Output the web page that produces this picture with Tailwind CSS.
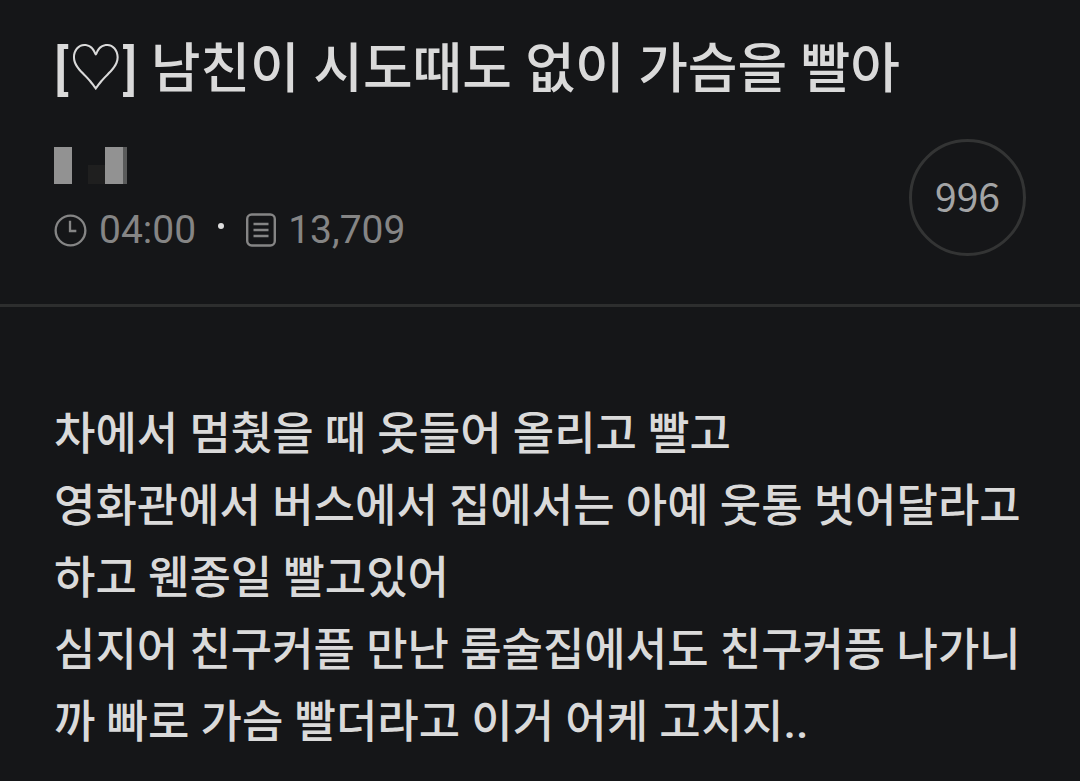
<!DOCTYPE html>
<html lang="ko">
<head>
    <meta charset="UTF-8">
    <meta name="viewport" content="width=device-width, initial-scale=1.0">
    <title>[♡] 남친이 시도때도 없이 가슴을 빨아</title>
    <script src="https://cdn.jsdelivr.net/npm/@tailwindcss/browser@4"></script>
</head>
<body class="bg-[#151618] text-[#dadada] font-['Roboto','Noto_Sans_CJK_KR',sans-serif]">
    <article>
        <!-- Cabecera -->
        <header class="border-b-3 border-[#2d2e2e] px-[54px] pt-[34px] pb-12">
            <h1 class="text-[54px] leading-[72px] font-medium">[<span class="font-normal leading-none font-['Noto_Sans_CJK_KR',sans-serif]">♡</span>] 남친이 시도때도 없이 가슴을 빨아</h1>
            <div class="mt-[33px] flex items-start justify-between">
                <div class="pt-2">
                    <!-- Autor oculto -->
                    <div class="flex h-[37px] w-[73px]" aria-hidden="true">
                        <span class="w-[18px] bg-[#929292]"></span>
                        <span class="w-4"></span>
                        <span class="mt-auto h-[19px] w-[17px] bg-[#1f1f1f]"></span>
                        <span class="w-[18px] bg-[#929292]"></span>
                        <span class="w-1 bg-[#5a5b5b]"></span>
                    </div>
                    <div class="mt-[22px] flex h-12 items-center text-[39px] leading-[48px] text-[#858585]">
                        <svg class="mr-3 size-[33px]" viewBox="0 0 34 34" fill="none" stroke="currentColor" stroke-width="2.4" aria-hidden="true">
                            <circle cx="17" cy="17" r="15.3"/>
                            <path d="M16.500 7v10.500h6.500"/>
                        </svg>
                        <time datetime="04:00">04:00</time>
                        <span class="mx-[22px] mb-2 size-[6px] rounded-full bg-[#dedede]"></span>
                        <svg class="mr-3 h-[34px] w-[30px]" viewBox="0 0 30 34" fill="none" stroke="currentColor" stroke-width="2.4" aria-hidden="true">
                            <rect x="1.200" y="1.500" width="27.600" height="31" rx="4.500"/>
                            <path d="M7.500 11h15M7.500 17h15M7.500 23h15"/>
                        </svg>
                        <span>13,709</span>
                    </div>
                </div>
                <button type="button" class="size-[117px] rounded-full border-3 border-[#333434] pb-1 text-[39px] text-[#a3a4a5] font-['Noto_Sans_CJK_KR',sans-serif]">996</button>
            </div>
        </header>

        <!-- Contenido -->
        <div class="px-[54px] pt-[92px] pb-6 text-[45px] leading-[72px] font-medium break-all">
            <p>차에서 멈췄을 때 옷들어 올리고 빨고</p>
            <p>영화관에서 버스에서 집에서는 아예 웃통 벗어달라고 하고 웬종일 빨고있어</p>
            <p>심지어 친구커플 만난 룸술집에서도 친구커픙 나가니까 빠로 가슴 빨더라고 이거 어케 고치지..</p>
        </div>
    </article>
</body>
</html>
